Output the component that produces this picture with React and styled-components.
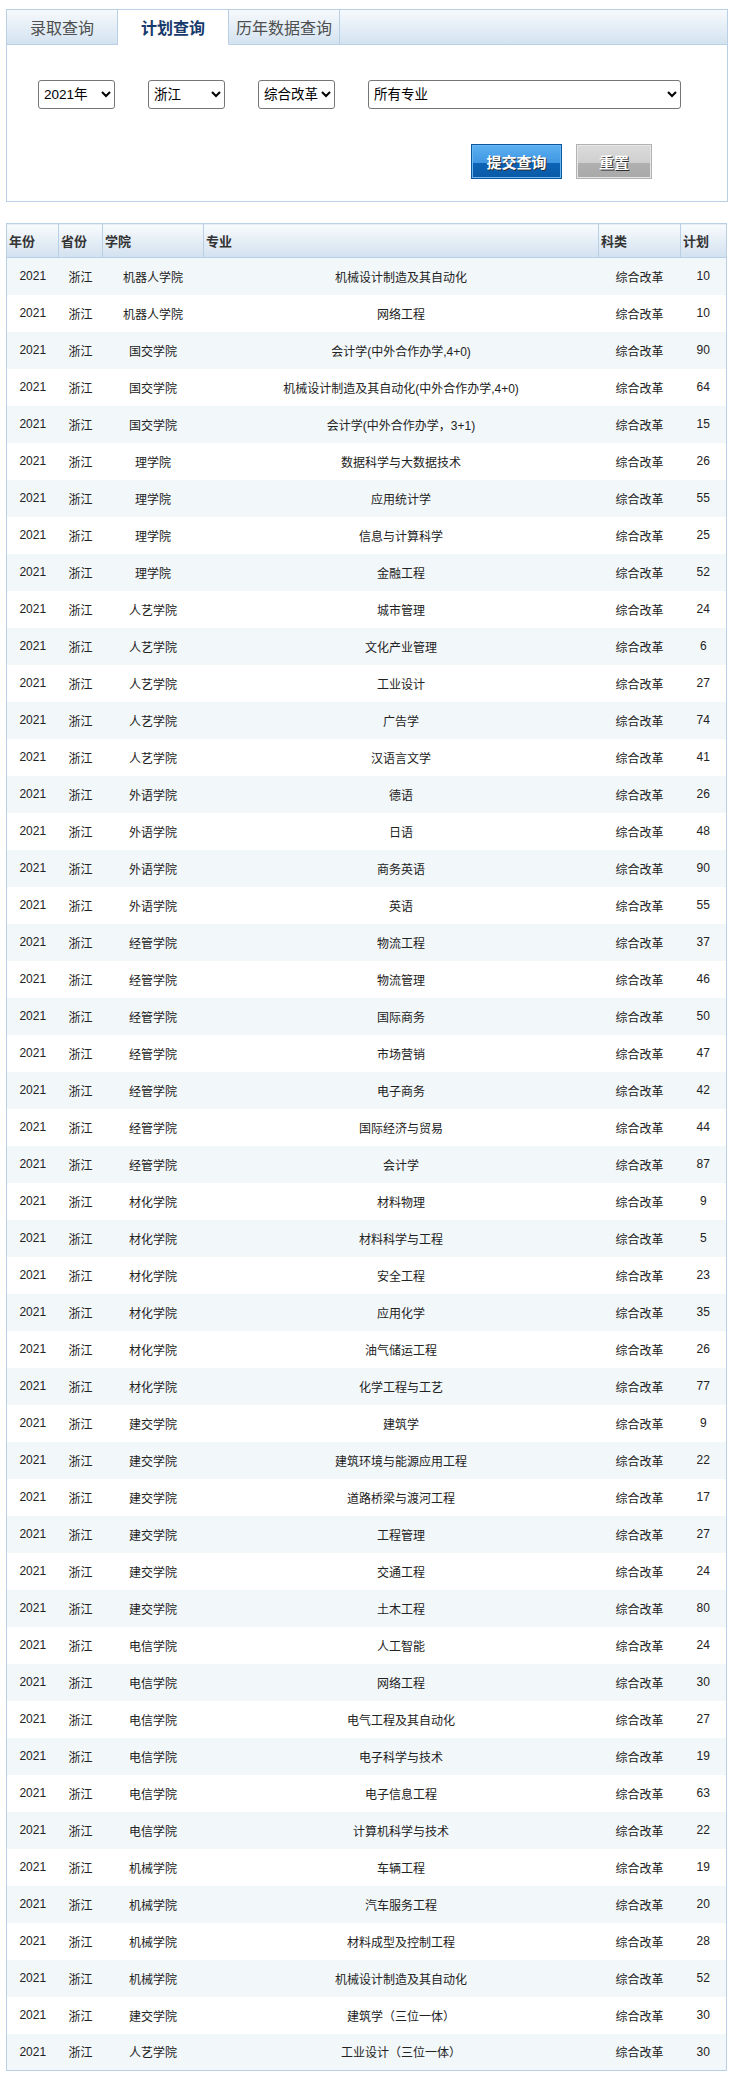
import React, { useState } from "react";
import styled, { createGlobalStyle } from "styled-components";

const GlobalStyle = createGlobalStyle`
  html, body { margin: 0; padding: 0; background: #fff; }
  body { font-family: "Liberation Sans", "Noto Sans CJK SC", sans-serif; color: #222; }
`;

const Page = styled.div`
  padding: 9px 4px 6px 6px;
  width: 722px;
`;

const Panel = styled.div`
  width: 722px;
  box-sizing: border-box;
  border: 1px solid #b9cfe6;
  background: #fff;
`;

const TabBar = styled.div`
  display: flex;
  height: 35px;
  background: linear-gradient(to bottom, #f6f9fc 0%, #e6eff7 45%, #d3e2f0 100%);
`;

const Tab = styled.div`
  width: 111px;
  box-sizing: border-box;
  display: flex;
  align-items: center;
  justify-content: center;
  font-size: 16px;
  border-right: 1px solid #b9cfe6;
  border-bottom: 1px solid ${(p) => (p.$active ? "transparent" : "#b9cfe6")};
  background: ${(p) => (p.$active ? "#fff" : "transparent")};
  color: ${(p) => (p.$active ? "#173a6c" : "#4f4f4f")};
  font-weight: ${(p) => (p.$active ? "bold" : "normal")};
  cursor: pointer;
`;

const TabFill = styled.div`
  flex: 1;
  border-bottom: 1px solid #b9cfe6;
`;

const FormArea = styled.div`
  padding: 35px 0 22px 31px;
  display: flex;
  flex-direction: column;
  gap: 35px;
`;

const SelectRow = styled.div`
  display: flex;
  gap: 33px;
`;

const Select = styled.select`
  width: ${(p) => p.$w}px;
  height: 29px;
  box-sizing: border-box;
  border: 1px solid #767676;
  border-radius: 3px;
  background: #fff;
  font-family: "Liberation Sans", "Noto Sans CJK SC", sans-serif;
  font-size: 13.5px;
  color: #000;
  padding: 0 0 0 1px;
`;

const ButtonRow = styled.div`
  display: flex;
  gap: 14px;
  padding-left: 433px;
`;

const Button = styled.button`
  height: 35px;
  width: ${(p) => p.$w}px;
  box-sizing: border-box;
  font-family: "Liberation Sans", "Noto Sans CJK SC", sans-serif;
  font-size: 15px;
  font-weight: bold;
  color: #fff;
  text-shadow: 1px 1px 0 #2b2b2b;
  padding: 0;
  cursor: pointer;
  border: 1px solid ${(p) => (p.$primary ? "#0d579f" : "#b2b2b2")};
  box-shadow: inset 0 0 0 1px ${(p) => (p.$primary ? "#6ab8f2" : "#e6e6e6")};
  background: ${(p) =>
    p.$primary
      ? "linear-gradient(to bottom, #5cb0f1 0%, #3f97e2 55%, #0c63b6 55%, #0a5aa6 100%)"
      : "linear-gradient(to bottom, #dbdbdb 0%, #cfcfcf 55%, #b0b0b0 55%, #a9a9a9 100%)"};
`;

const Table = styled.table`
  margin-top: 21px;
  width: 720px;
  table-layout: fixed;
  border-collapse: collapse;
  border: 1px solid #b9cfe6;
  font-size: 12px;
`;

const HeadCell = styled.th`
  height: 33px;
  padding: 0 0 0 2px;
  text-align: left;
  font-weight: bold;
  font-size: 13px;
  color: #333;
  border-right: 1px solid #b9cfe6;
  border-bottom: 1px solid #b9cfe6;
  background: linear-gradient(to bottom, #f8fbfd 0%, #e7eff7 45%, #d2e1ef 100%);
`;

const Row = styled.tr`
  height: 37px;
  background: ${(p) => (p.$odd ? "#f2f7fa" : "#fff")};
`;

const Cell = styled.td`
  padding: 0;
  text-align: center;
  color: #222;
`;

const cols = [
  ["年份", 52],
  ["省份", 44],
  ["学院", 101],
  ["专业", 395],
  ["科类", 82],
  ["计划", 46],
];

const data = [
  ["机器人学院", "机械设计制造及其自动化", 10],
  ["机器人学院", "网络工程", 10],
  ["国交学院", "会计学(中外合作办学,4+0)", 90],
  ["国交学院", "机械设计制造及其自动化(中外合作办学,4+0)", 64],
  ["国交学院", "会计学(中外合作办学，3+1)", 15],
  ["理学院", "数据科学与大数据技术", 26],
  ["理学院", "应用统计学", 55],
  ["理学院", "信息与计算科学", 25],
  ["理学院", "金融工程", 52],
  ["人艺学院", "城市管理", 24],
  ["人艺学院", "文化产业管理", 6],
  ["人艺学院", "工业设计", 27],
  ["人艺学院", "广告学", 74],
  ["人艺学院", "汉语言文学", 41],
  ["外语学院", "德语", 26],
  ["外语学院", "日语", 48],
  ["外语学院", "商务英语", 90],
  ["外语学院", "英语", 55],
  ["经管学院", "物流工程", 37],
  ["经管学院", "物流管理", 46],
  ["经管学院", "国际商务", 50],
  ["经管学院", "市场营销", 47],
  ["经管学院", "电子商务", 42],
  ["经管学院", "国际经济与贸易", 44],
  ["经管学院", "会计学", 87],
  ["材化学院", "材料物理", 9],
  ["材化学院", "材料科学与工程", 5],
  ["材化学院", "安全工程", 23],
  ["材化学院", "应用化学", 35],
  ["材化学院", "油气储运工程", 26],
  ["材化学院", "化学工程与工艺", 77],
  ["建交学院", "建筑学", 9],
  ["建交学院", "建筑环境与能源应用工程", 22],
  ["建交学院", "道路桥梁与渡河工程", 17],
  ["建交学院", "工程管理", 27],
  ["建交学院", "交通工程", 24],
  ["建交学院", "土木工程", 80],
  ["电信学院", "人工智能", 24],
  ["电信学院", "网络工程", 30],
  ["电信学院", "电气工程及其自动化", 27],
  ["电信学院", "电子科学与技术", 19],
  ["电信学院", "电子信息工程", 63],
  ["电信学院", "计算机科学与技术", 22],
  ["机械学院", "车辆工程", 19],
  ["机械学院", "汽车服务工程", 20],
  ["机械学院", "材料成型及控制工程", 28],
  ["机械学院", "机械设计制造及其自动化", 52],
  ["建交学院", "建筑学（三位一体）", 30],
  ["人艺学院", "工业设计（三位一体）", 30],
];

const tabs = ["录取查询", "计划查询", "历年数据查询"];

export default function App() {
  const [active, setActive] = useState(1);
  return (
    <Page>
      <GlobalStyle />
      <Panel>
        <TabBar>
          {tabs.map((t, i) => (
            <Tab key={t} $active={i === active} onClick={() => setActive(i)}>
              {t}
            </Tab>
          ))}
          <TabFill />
        </TabBar>
        <FormArea>
          <SelectRow>
            <Select $w={77} defaultValue="2021">
              <option value="2021">2021年</option>
              <option value="2020">2020年</option>
              <option value="2019">2019年</option>
            </Select>
            <Select $w={77} defaultValue="zj">
              <option value="zj">浙江</option>
            </Select>
            <Select $w={77} defaultValue="zh">
              <option value="zh">综合改革</option>
            </Select>
            <Select $w={313} defaultValue="all">
              <option value="all">所有专业</option>
            </Select>
          </SelectRow>
          <ButtonRow>
            <Button $primary $w={91}>提交查询</Button>
            <Button $w={76}>重置</Button>
          </ButtonRow>
        </FormArea>
      </Panel>
      <Table>
        <colgroup>
          {cols.map(([c, w]) => (
            <col key={c} style={{ width: w }} />
          ))}
        </colgroup>
        <thead>
          <tr>
            {cols.map(([c]) => (
              <HeadCell key={c}>{c}</HeadCell>
            ))}
          </tr>
        </thead>
        <tbody>
          {data.map((r, i) => (
            <Row key={i} $odd={i % 2 === 0}>
              <Cell>2021</Cell>
              <Cell>浙江</Cell>
              <Cell>{r[0]}</Cell>
              <Cell>{r[1]}</Cell>
              <Cell>综合改革</Cell>
              <Cell>{r[2]}</Cell>
            </Row>
          ))}
        </tbody>
      </Table>
    </Page>
  );
}
